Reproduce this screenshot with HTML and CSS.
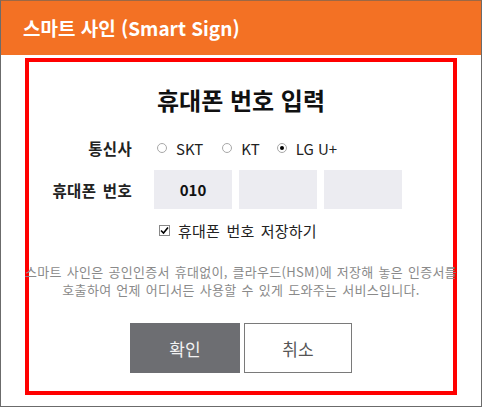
FILE: index.html
```html
<!DOCTYPE html>
<html lang="ko">
<head>
<meta charset="utf-8">
<link rel="stylesheet" href="styles.css">
</head>
<body>
<div class="frame">
  <div class="header">스마트 사인 (Smart Sign)</div>
  <div class="box">
    <h1 class="title">휴대폰 번호 입력</h1>
    <div class="row row-carrier">
      <span class="label">통신사</span>
      <div class="options">
        <span class="opt"><span class="radio"></span>SKT</span>
        <span class="opt"><span class="radio"></span>KT</span>
        <span class="opt"><span class="radio checked"></span>LG U+</span>
      </div>
    </div>
    <div class="row row-phone">
      <span class="label">휴대폰 번호</span>
      <div class="inputs">
        <span class="field">010</span>
        <span class="field"></span>
        <span class="field"></span>
      </div>
    </div>
    <div class="save">
      <span class="check"><svg width="9" height="9" viewBox="0 0 9 9"><path d="M1 4.5 L3.5 7 L8 1.5" fill="none" stroke="#000" stroke-width="1.6"/></svg></span>
      휴대폰 번호 저장하기
    </div>
    <p class="desc">스마트 사인은 공인인증서 휴대없이, 클라우드(HSM)에 저장해 놓은 인증서를<br>호출하여 언제 어디서든 사용할 수 있게 도와주는 서비스입니다.</p>
    <div class="buttons">
      <button class="btn ok">확인</button>
      <button class="btn cancel">취소</button>
    </div>
  </div>
</div>
</body>
</html>
```

FILE: styles.css
```css
* { box-sizing: border-box; }
html, body { margin: 0; padding: 0; background: #fff; }
body {
  font-family: "Noto Sans CJK KR", "Noto Sans", sans-serif;
  color: #222;
}
.frame {
  width: 482px;
  height: 407px;
  border: 1px solid #6b6b6b;
  border-top-color: #9c6845;
  display: flex;
  flex-direction: column;
}
.header {
  height: 54px;
  background: #f37124;
  color: #fff;
  font-size: 19px;
  font-weight: 700;
  padding-left: 22px;
  line-height: 54px;
}
.box {
  margin: 3px 24px 0 24px;
  height: 337px;
  border: 4px solid #ff0000;
  display: flex;
  flex-direction: column;
  align-items: center;
  padding-top: 22px;
}
.title {
  margin: 0;
  font-size: 24px;
  line-height: 32px;
  font-weight: 700;
  color: #111;
}
.row {
  align-self: stretch;
  display: grid;
  grid-template-columns: 103px 1fr;
  column-gap: 22px;
  align-items: center;
}
.label {
  text-align: right;
  font-size: 15.5px;
  font-weight: 700;
  word-spacing: 2px;
  letter-spacing: 0.3px;
  color: #222;
}
.row-carrier { margin-top: 20px; height: 24px; }
.options { display: flex; align-items: center; font-size: 15px; color: #222; }
.opt { display: flex; align-items: center; margin-right: 16px; }
.opt + .opt { margin-right: 14px; }
.radio {
  width: 10px;
  height: 10px;
  border-radius: 50%;
  border: 1px solid #a8a8a8;
  background: #fff;
  margin-right: 9px;
  margin-left: 3px;
  display: inline-flex;
  align-items: center;
  justify-content: center;
}
.radio.checked::after {
  content: "";
  width: 4px;
  height: 4px;
  border-radius: 50%;
  background: #000;
}
.row-phone { margin-top: 10px; }
.inputs { display: flex; }
.field {
  width: 78px;
  height: 39px;
  background: #ececf1;
  margin-right: 7px;
  font-size: 15px;
  font-weight: 700;
  color: #111;
  display: flex;
  align-items: center;
  justify-content: center;
}
.save {
  align-self: stretch;
  margin-top: 11px;
  height: 20px;
  display: flex;
  align-items: center;
  font-size: 15px;
  word-spacing: 2px;
  letter-spacing: 0.2px;
  color: #222;
  padding-left: 130px;
}
.check {
  width: 11px;
  height: 11px;
  border: 1px solid #888;
  margin-right: 8px;
  display: inline-flex;
  align-items: center;
  justify-content: center;
}
.desc {
  margin: 23px 0 0;
  font-size: 13px;
  line-height: 18px;
  letter-spacing: 0.3px;
  word-spacing: 1px;
  color: #8a8a8a;
  text-align: center;
  white-space: nowrap;
}
.buttons {
  margin-top: 24px;
  display: flex;
  gap: 4px;
}
.btn {
  height: 50px;
  font-family: inherit;
  font-size: 17px;
  border: none;
  padding: 0;
}
.ok { width: 110px; background: #6d6e72; color: #f2f2f2; }
.cancel { width: 108px; background: #fff; color: #555; border: 1px solid #7a7a7a; }
```
